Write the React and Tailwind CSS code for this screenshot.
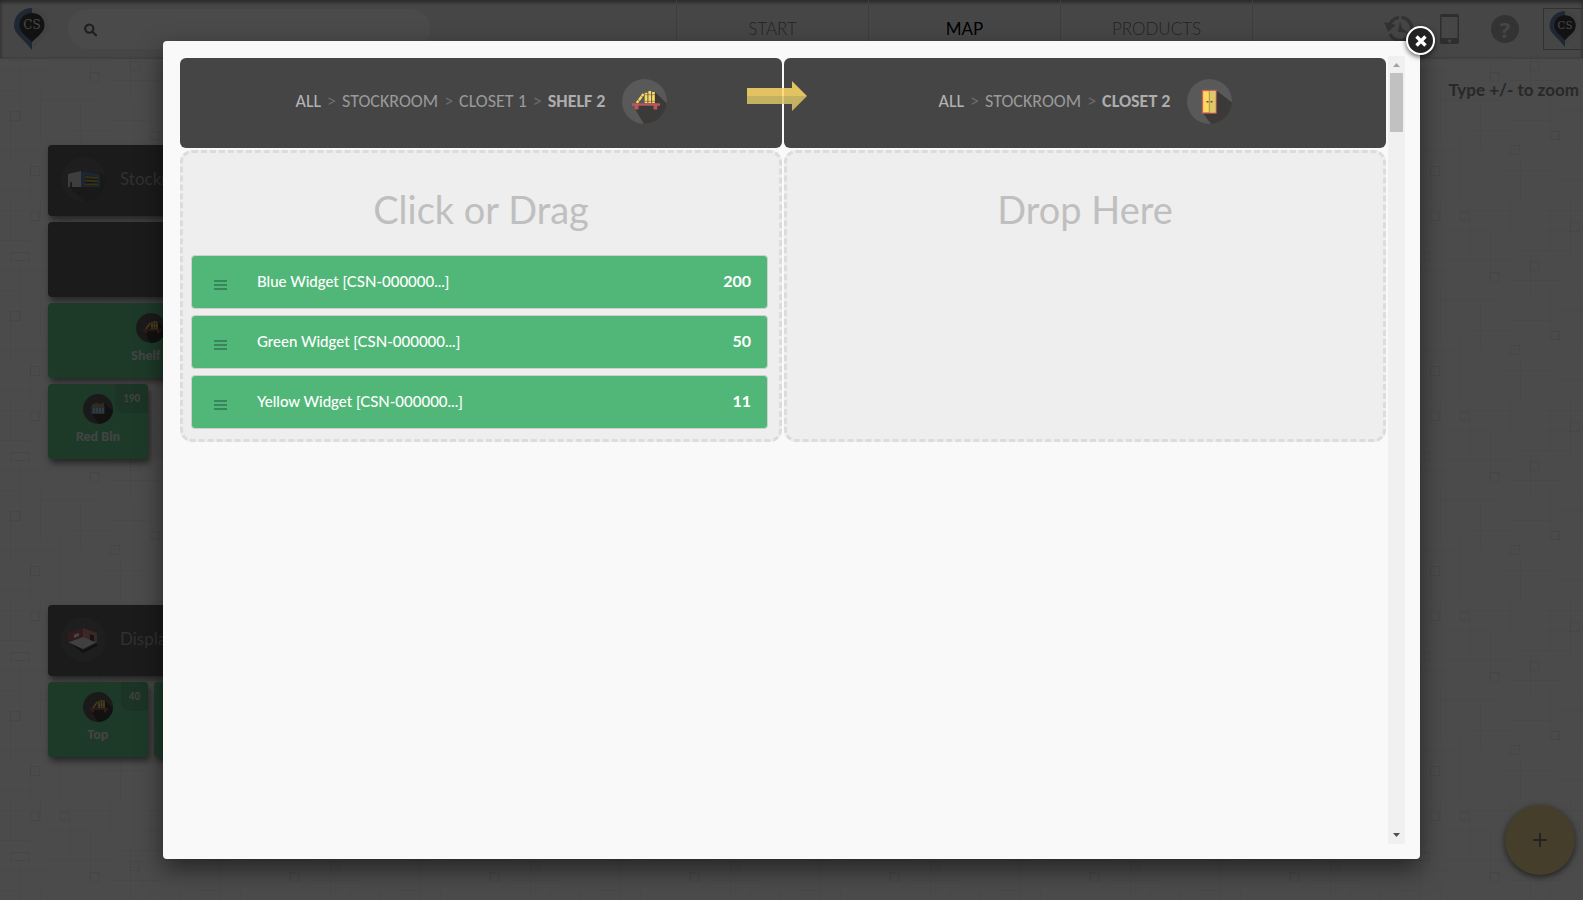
import React from "react";

const items = [
  { name: "Blue Widget [CSN-000000...]", count: 200 },
  { name: "Green Widget [CSN-000000...]", count: 50 },
  { name: "Yellow Widget [CSN-000000...]", count: 11 },
];

const tabs = ["START", "MAP", "PRODUCTS"];

const Logo = ({ className }) => (
  <svg viewBox="0 0 36 42" className={className} aria-hidden="true">
    <path d="M18 0C8 0 0 7.500 0 17.500C0 26 8 29 18 42Z" fill="#6a85a8" />
    <path d="M18 0C28 0 35 7.500 35 17.500C35 26 28 29 18 42Z" fill="#e0e0e0" />
    <path d="M18 5C10.500 5 5.500 10 5.500 17C5.500 24 11 27 18 34C25 27 30.500 24 30.500 17C30.500 10 25.500 5 18 5Z" fill="#3c3c3c" />
    <text x="18" y="21" textAnchor="middle" fontSize="12" fill="#e8e8e8" fontFamily="DejaVu Serif, serif">
      CS
    </text>
  </svg>
);

const ShelfIcon = ({ className, bg = "#595959" }) => (
  <svg viewBox="0 0 45 45" className={className} aria-hidden="true">
    <circle cx="22.500" cy="22.500" r="22.500" fill={bg} />
    <path d="M33 13L44.800 24.500A22.500 22.500 0 0 1 22 45L13 30V24.500H33Z" fill="#3b3a38" />
    <path d="M14.800 24L21.500 15" stroke="#fad95f" strokeWidth="2.300" />
    <path d="M18.500 16.500l3 2.200M15.500 20.500l3 2.200" stroke="#4a4636" strokeWidth="0.600" />
    <g fill="#fad95f">
      <rect x="22.700" y="13.800" width="2.700" height="10.500" />
      <rect x="26.400" y="12" width="2.700" height="12.300" />
      <rect x="30.100" y="13" width="2.700" height="11.300" />
    </g>
    <path d="M22.500 15.700h10.500M22.500 22.300h10.500" stroke="#6a6140" strokeWidth="0.600" />
    <path d="M10 24.300h28v2.500h-2.800v3.700h-3.700v-3.700h-15v3.700h-3.700v-3.700h-2.800z" fill="#b9575a" />
  </svg>
);

const ClosetIcon = ({ className }) => (
  <svg viewBox="0 0 45 45" className={className} aria-hidden="true">
    <circle cx="22.500" cy="22.500" r="22.500" fill="#595959" />
    <path d="M29.500 11.500L45 23.500A22.500 22.500 0 0 1 24 45L16 34Z" fill="#3b3a38" />
    <rect x="15.500" y="11.500" width="13.500" height="22.500" fill="#ffd95e" stroke="#c9605a" strokeWidth="1.300" />
    <rect x="22.500" y="12" width="6" height="21.500" fill="#dcc86a" />
    <path d="M22.300 12v22" stroke="#a98a45" strokeWidth="0.900" />
    <path d="M19.500 22.800h2M23.500 22.800h2" stroke="#555" strokeWidth="1.400" />
  </svg>
);

const BinIcon = ({ className }) => (
  <svg viewBox="0 0 30 30" className={className} aria-hidden="true">
    <circle cx="15" cy="15" r="15" fill="#595959" />
    <path d="M22 10L30 17A15 15 0 0 1 16 30L9 20Z" fill="#3b3a38" />
    <path d="M9 12v-2h3v-1h3v1h3v-1h3v3z" fill="#b98a3c" />
    <rect x="8.500" y="12" width="13" height="8" fill="#7a9cbc" />
    <path d="M11 14v5M14 14v5M17 14v5M20 14v5" stroke="#d4e0ea" strokeWidth="1.100" />
  </svg>
);

const WarehouseIcon = ({ className }) => (
  <svg viewBox="0 0 45 45" className={className} aria-hidden="true">
    <circle cx="22.500" cy="22.500" r="22.500" fill="#646464" />
    <path d="M39 16L45 20A22.500 22.500 0 0 1 24 45L8 30Z" fill="#545454" />
    <path d="M7 17L20 14V30H11v-5H9v5H7z" fill="#d0d0d0" />
    <path d="M20 14L39 17.500V30H20z" fill="#5b7fa3" />
    <path d="M24 18.500l13 1.500v9H24z" fill="#3d4a55" />
    <path d="M24 20l13 1M24 23.500l13 0.800M24 27.500h13" stroke="#b8a650" strokeWidth="1.900" />
  </svg>
);

const DisplayIcon = ({ className }) => (
  <svg viewBox="0 0 45 45" className={className} aria-hidden="true">
    <circle cx="22.500" cy="22.500" r="22.500" fill="#646464" />
    <path d="M7 25L22 33L36 26V29L22 36Z" fill="#3a3a3a" />
    <path d="M7 16L22 11V21L7 26Z" fill="#a85a5e" />
    <path d="M22 11L36 16V26L22 21Z" fill="#c58285" />
    <path d="M7.500 25.500L22 20L35 25.500L22 32Z" fill="#d8d8d8" />
    <path d="M13 17.500l5-1.500v3l-5 2z" fill="#e8e8e8" />
    <path d="M29 17l4 1.500v6l-4-1.500z" fill="#454545" />
  </svg>
);

// faint mosaic behind the map
const Texture = () => (
  <svg className="absolute inset-0 h-full w-full" aria-hidden="true">
    <defs>
      <pattern id="mosaic" width="200" height="200" patternUnits="userSpaceOnUse">
        <g fill="none" stroke="#000" strokeOpacity="0.030">
          <path d="M0 10.500h40M60 10.500h50M140 10.500h60M10.500 0v40M40.500 0v20M110.500 0v30M170.500 0v60" />
          <path d="M0 40.500h30M90.500 30v50M50 60.500h60M120 50.500h50M20.500 60v60M130.500 50v50M150.500 90v40" />
          <path d="M0 90.500h20M40 100.500h60M40.500 90v50M80.500 100v50M110 120.500h40M180.500 90v60M160 110.500h40" />
          <path d="M0 150.500h60M60.500 140v60M100 170.500h50M120.500 160v40M160 180.500h40M30.500 160v40M0 190.500h30" />
          <path d="M50 30.500h40M70.500 20v40M140 30.500h30M150.500 10v40M0 70.500h50M110 80.500h50M70 130.500h40M10.500 120v40" />
        </g>
        <g fill="none" stroke="#000" strokeOpacity="0.060">
          <path d="M30.500 12.500h9v8h-9zM60.500 12.500h9v8h-9zM10.500 52.500h19v8h-19zM130.500 61.500h9v9h-9zM90.500 72.500h9v9h-9z" />
          <path d="M10.500 111.500h9v9h-9zM150.500 131.500h9v8h-9zM110.500 145.500h9v9h-9zM30.500 166.500h9v9h-9zM170.500 22.500h9v9h-9z" />
        </g>
      </pattern>
    </defs>
    <rect width="100%" height="100%" fill="url(#mosaic)" />
  </svg>
);

const Tile = ({ icon, label, count, className }) => (
  <div
    className={`relative flex h-[75px] flex-col items-center gap-[3px] rounded bg-[#62c187] pt-2.5 font-[Carlito,Calibri,Lato,sans-serif] text-[14px] font-bold text-[#e4e4e4] shadow-[2px_4px_6px_rgba(0,0,0,0.5)] ${className}`}
  >
    {icon}
    <span className="leading-5">{label}</span>
    {count && (
      <span className="absolute top-0 right-0 rounded-tr rounded-bl-lg bg-[#5ab07c] px-2 text-[11px] leading-[29px] text-[#d8d8d8]">
        {count}
      </span>
    )}
  </div>
);

const SectionTitle = ({ icon, children }) => (
  <h2 className="flex h-[71px] w-80 items-center gap-3.5 rounded bg-[#5a5a5a] pb-[3px] pl-[13px] text-[17px] text-[#a0a0a0] shadow-[2px_4px_6px_rgba(0,0,0,0.5)]">
    {icon}
    {children}
  </h2>
);

const TopBar = () => (
  <header className="relative flex h-[59px] items-center overflow-hidden border-b border-[#d8d8d8] bg-[#ebebeb] pl-3.5 shadow-[inset_0_2px_4px_rgba(0,0,0,0.5)]">
    <a href="#home" aria-label="Home">
      <Logo className="h-[42px] w-9" />
    </a>
    <label className="ml-[18px] flex h-10 w-[362px] items-center rounded-full bg-[#f9f9f9] pl-4">
      <svg viewBox="0 0 14 14" className="mt-0.5 h-3.5 w-3.5" fill="none" stroke="#666" strokeWidth="2.200">
        <circle cx="5.500" cy="5.500" r="4.300" />
        <path d="M8.800 8.800l4.500 4.500" />
      </svg>
      <input aria-label="Search" className="w-full px-2 outline-none" />
    </label>
    <nav className="ml-auto flex h-full">
      {tabs.map((tab) => (
        <a
          key={tab}
          href={`#${tab.toLowerCase()}`}
          className={`flex w-48 items-center justify-center border-l border-[#cfcfcf] text-[17px] ${
            tab === "MAP" ? "text-black" : "font-light text-[#777]"
          }`}
        >
          {tab}
        </a>
      ))}
    </nav>
    <div className="flex h-full w-[331px] shrink-0 items-center border-l border-[#cfcfcf]">
      <button aria-label="History" className="ml-[131px] shrink-0">
        <svg viewBox="0 0 30 28" className="h-7 w-[30px]" fill="none" stroke="#a8a8a8" strokeWidth="3.400">
          <path d="M5 12A11.500 11.500 0 0 1 15 2.500M17.500 2.500A11.500 11.500 0 1 1 6 19" />
          <path d="M0 7l12 3-8 7z" fill="#a8a8a8" stroke="none" />
          <path d="M14 17L16 6L18 13L24 18Z" fill="#a8a8a8" stroke="none" />
        </svg>
      </button>
      <button aria-label="Mobile" className="ml-[26px] shrink-0">
        <svg viewBox="0 0 19 30" className="h-[30px] w-[19px]">
          <rect width="19" height="30" rx="2" fill="#9a9a9a" />
          <rect x="1.500" y="3" width="16" height="21" fill="#ebebeb" />
          <circle cx="9.500" cy="27" r="1.800" fill="#ddd" />
        </svg>
      </button>
      <button
        aria-label="Help"
        className="ml-8 h-7 w-7 shrink-0 rounded-full bg-[#aaa] font-['Open_Sans',sans-serif] text-[22px] leading-7 font-bold text-[#ebebeb]"
      >
        ?
      </button>
      <button aria-label="Account" className="ml-6 h-[42px] shrink-0 border border-[#a8a8a8] px-[5px]">
        <Logo className="h-9 w-8" />
      </button>
    </div>
  </header>
);

const Crumbs = ({ path, current, icon }) => (
  <div className="flex h-[90px] items-center justify-center gap-4 rounded-md bg-[#454545] pb-1">
    <nav className="flex gap-1.5 font-[Carlito,Calibri,Lato,sans-serif] text-[18px] text-[#9a9a9a]">
      {path.map((p, i) => (
        <React.Fragment key={p}>
          <a href="#map" className={i === 0 ? "text-[#b4b4b4]" : ""}>
            {p}
          </a>
          <span className="text-[#6c6c6c]">&gt;</span>
        </React.Fragment>
      ))}
      <span className="font-bold text-[#adadad]">{current}</span>
    </nav>
    {icon}
  </div>
);

const Item = ({ name, count }) => (
  <li className="flex h-[54px] items-center rounded border border-[#d0d0d0] bg-[#51b778] pr-4 pb-0.5 pl-[22px] text-white">
    <svg viewBox="0 0 13 10" className="mt-2 h-2.5 w-[13px]" stroke="#37855a" strokeWidth="2">
      <path d="M0 1h13M0 5h13M0 9h13" />
    </svg>
    <span className="ml-[30px] text-[15px] font-medium">{name}</span>
    <span className="ml-auto text-[16px] font-bold">{count}</span>
  </li>
);

const Zone = ({ title, children }) => (
  <section className="rounded-xl border-[3px] border-dashed border-[#dcdcdc] bg-[#eee] pt-[30px] pr-[11px] pb-2.5 pl-2">
    <h1 className="h-[72px] pl-[3px] text-center text-[38px] leading-[52px] text-[#bfbfbf]">{title}</h1>
    {children}
  </section>
);

const MoveDialog = () => (
  <div role="dialog" aria-label="Move items" className="relative h-full w-full rounded-sm bg-[#f9f9f9] p-[15px] shadow-[0_10px_25px_rgba(0,0,0,0.5)]">
    <button
      aria-label="Close"
      className="absolute -top-[15px] -right-[15px] flex h-[29px] w-[29px] items-center justify-center rounded-full border-2 border-white bg-[#222] shadow-[0_2px_5px_rgba(0,0,0,0.6)]"
    >
      <svg viewBox="0 0 12 12" className="h-3 w-3" stroke="#fff" strokeWidth="3.400">
        <path d="M1.500 1.500l9 9M10.500 1.500l-9 9" />
      </svg>
    </button>
    <div className="flex h-full">
      <div className="relative grid min-w-0 flex-1 auto-rows-min grid-cols-2 gap-0.5 p-0.5">
        <Crumbs
          path={["ALL", "STOCKROOM", "CLOSET 1"]}
          current="SHELF 2"
          icon={<ShelfIcon className="h-[45px] w-[45px]" />}
        />
        <Crumbs
          path={["ALL", "STOCKROOM"]}
          current="CLOSET 2"
          icon={<ClosetIcon className="h-[45px] w-[45px]" />}
        />
        <Zone title="Click or Drag">
          <ul className="flex flex-col gap-1.5">
            {items.map((item) => (
              <Item key={item.name} {...item} />
            ))}
          </ul>
        </Zone>
        <Zone title="Drop Here" />
        <svg viewBox="0 0 60 30" className="absolute top-[25px] left-1/2 -ml-9 h-[30px] w-[60px]" aria-hidden="true">
          <path d="M0 7h45V0L60 15H0z" fill="#ffd966" fillOpacity="0.850" />
          <path d="M0 15h60L45 30v-7H0z" fill="#dcc566" fillOpacity="0.850" />
        </svg>
      </div>
      <div className="flex w-[17px] flex-col items-center bg-[#f0f0f0]">
        <svg viewBox="0 0 17 17" className="h-[17px] w-[17px]">
          <path d="M5 11h7L8.500 7z" fill="#a3a3a3" />
        </svg>
        <div className="h-[59px] w-[13px] bg-[#c1c1c1]" />
        <svg viewBox="0 0 17 17" className="mt-auto h-[17px] w-[17px]">
          <path d="M5 6h7L8.500 10z" fill="#505050" />
        </svg>
      </div>
    </div>
  </div>
);

export default function App() {
  return (
    <div className="relative h-screen overflow-hidden bg-[#fafafa] font-[Lato,sans-serif]">
      <Texture />
      <TopBar />
      <p className="absolute top-[77px] right-1 text-[17px] font-bold text-[#888]">Type +/- to zoom</p>
      <main className="relative flex flex-col gap-[146px] pt-[86px] pl-12">
        <section className="flex flex-col gap-1.5">
          <SectionTitle icon={<WarehouseIcon className="h-[45px] w-[45px]" />}>Stockroom</SectionTitle>
          <div className="h-[75px] w-80 rounded bg-[#5a5a5a] shadow-[2px_4px_6px_rgba(0,0,0,0.5)]" />
          <Tile className="w-[206px]" label="Shelf 1" icon={<ShelfIcon className="h-[30px] w-[30px]" />} />
          <div className="flex gap-1.5">
            <Tile className="w-[100px]" label="Red Bin" count="190" icon={<BinIcon className="h-[30px] w-[30px]" />} />
            <div className="h-[75px] w-[100px] rounded bg-black/5" />
          </div>
        </section>
        <section className="flex flex-col gap-1.5">
          <SectionTitle icon={<DisplayIcon className="h-[45px] w-[45px]" />}>Display</SectionTitle>
          <div className="flex gap-1.5">
            <Tile className="w-[100px]" label="Top" count="40" icon={<ShelfIcon className="h-[30px] w-[30px]" />} />
            <Tile className="w-[100px]" label="Bottom" icon={<ShelfIcon className="h-[30px] w-[30px]" />} />
          </div>
        </section>
      </main>
      <button
        aria-label="Add"
        className="absolute right-2 bottom-[25px] flex h-[70px] w-[70px] items-center justify-center rounded-full bg-[#e3d08c] shadow-[0_2px_6px_rgba(0,0,0,0.6)]"
      >
        <svg viewBox="0 0 14 14" className="h-3.5 w-3.5" stroke="#777" strokeWidth="2">
          <path d="M7 0v14M0 7h14" />
        </svg>
      </button>
      <div className="absolute inset-0 bg-black/70 px-[163px] py-[41px]">
        <MoveDialog />
      </div>
    </div>
  );
}
